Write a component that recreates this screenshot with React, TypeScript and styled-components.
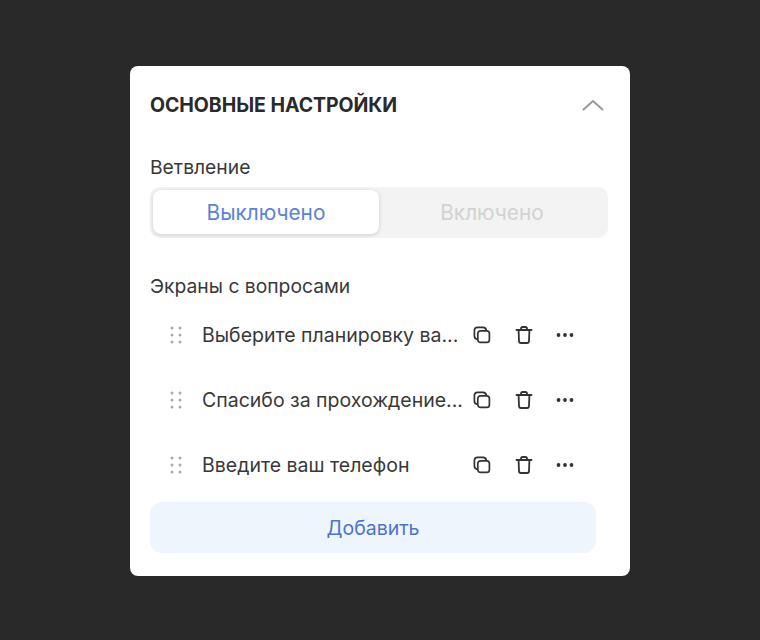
import React from "react";
import styled, { createGlobalStyle } from "styled-components";

const Global = createGlobalStyle`
  html, body { margin: 0; padding: 0; background: #292929; }
  body { font-family: Inter, "Noto Sans", sans-serif; }
`;

const Page = styled.div`
  width: 760px;
  height: 640px;
  background: #292929;
  display: flex;
  justify-content: center;
  align-items: flex-start;
  padding-top: 66px;
  box-sizing: border-box;
`;

const Card = styled.section`
  width: 500px;
  height: 510px;
  box-sizing: border-box;
  background: #fff;
  border-radius: 8px;
  padding: 0 20px;
  display: flex;
  flex-direction: column;
`;

const Header = styled.div`
  height: 76px;
  flex-shrink: 0;
  margin-bottom: 12px;
  padding-top: 1px;
  display: flex;
  align-items: center;
  justify-content: space-between;
`;

const Title = styled.h2`
  margin: 0;
  font-size: 19.5px;
  font-weight: 700;
  color: #2a2a2a;
  letter-spacing: -0.05px;
`;

const ChevronBtn = styled.span`
  display: flex;
  margin-right: 5px;
  color: #999;
`;

const Label = styled.div`
  font-size: 19.3px;
  line-height: 24px;
  color: #383838;
  height: 24px;
`;

const Segmented = styled.div`
  margin-top: 8px;
  width: 458px;
  height: 51px;
  flex-shrink: 0;
  box-sizing: border-box;
  padding: 3px 0 4px 3px;
  border-radius: 10px;
  background: #f3f3f3;
  display: flex;
`;

const Segment = styled.div<{ $active?: boolean }>`
  width: 226px;
  display: flex;
  align-items: center;
  justify-content: center;
  border-radius: 8px;
  font-size: 20.8px;
  color: ${(p) => (p.$active ? "#5a82d8" : "#d2d2d2")};
  background: ${(p) => (p.$active ? "#fff" : "transparent")};
  box-shadow: ${(p) => (p.$active ? "0 1px 4px rgba(0,0,0,0.16)" : "none")};
`;

const SectionLabel = styled(Label)`
  margin-top: 36px;
`;

const List = styled.div`
  margin-top: 5px;
  display: flex;
  flex-direction: column;
  gap: 1px;
`;

const Row = styled.div`
  height: 64px;
  display: flex;
  align-items: center;
  padding-left: 20px;
`;

const RowTitle = styled.span`
  margin-left: 19px;
  width: 262px;
  font-size: 19.5px;
  color: #383838;
  white-space: nowrap;
`;

const Actions = styled.div`
  display: flex;
  align-items: center;
  margin-left: 8px;
  gap: 21.5px;
  color: #333;
`;

const AddButton = styled.button`
  margin-top: 5px;
  width: 446px;
  height: 51px;
  flex-shrink: 0;
  border: 0;
  border-radius: 12px;
  background: #eff5fc;
  color: #4a74cf;
  font-family: inherit;
  font-size: 19.5px;
  padding: 0;
`;

const Grip = () => (
  <svg width="13" height="18" viewBox="0 0 13 18" fill="#ababab">
    {[2, 9, 16].flatMap((y) =>
      [2, 10].map((x) => <circle key={`${x}-${y}`} cx={x} cy={y} r="1.5" />)
    )}
  </svg>
);

const Copy = () => (
  <svg width="20" height="20" viewBox="0 0 20 20" fill="none" stroke="currentColor" strokeWidth="1.7" strokeLinejoin="round">
    <rect x="5.8" y="5.8" width="11.6" height="11.6" rx="2.7" />
    <path d="M5.8 14.4C3.7 14.2 2.4 13 2.4 11V5.6C2.4 3.5 3.5 2.4 5.6 2.4H11C13 2.4 14.2 3.7 14.4 5.8" />
  </svg>
);

const Trash = () => (
  <svg width="20" height="20" viewBox="0 0 20 20" fill="none" stroke="currentColor" strokeWidth="1.8" strokeLinecap="round" strokeLinejoin="round">
    <path d="M2.5 5H17.5" />
    <path d="M7 5V3.8C7 2.8 7.7 2 8.7 2H11.3C12.3 2 13 2.8 13 3.8V5" />
    <path d="M4.6 5L5 16C5 17.2 5.9 18 7 18H13C14.1 18 15 17.2 15 16L15.4 5" />
  </svg>
);

const Dots = () => (
  <svg width="20" height="20" viewBox="0 0 20 20" fill="currentColor">
    <circle cx="3.5" cy="10" r="1.9" />
    <circle cx="10" cy="10" r="1.9" />
    <circle cx="16.5" cy="10" r="1.9" />
  </svg>
);

const items = ["Выберите планировку ва...", "Спасибо за прохождение...", "Введите ваш телефон"];

export default function App() {
  return (
    <Page>
      <Global />
      <Card>
        <Header>
          <Title>ОСНОВНЫЕ НАСТРОЙКИ</Title>
          <ChevronBtn>
            <svg width="24" height="14" viewBox="0 0 24 14" fill="none" stroke="currentColor" strokeWidth="2" strokeLinecap="round" strokeLinejoin="round">
              <path d="M2.5 11.5L12 3L21.5 11.5" />
            </svg>
          </ChevronBtn>
        </Header>
        <Label>Ветвление</Label>
        <Segmented>
          <Segment $active>Выключено</Segment>
          <Segment>Включено</Segment>
        </Segmented>
        <SectionLabel>Экраны с вопросами</SectionLabel>
        <List>
          {items.map((t) => (
            <Row key={t}>
              <Grip />
              <RowTitle>{t}</RowTitle>
              <Actions>
                <Copy />
                <Trash />
                <Dots />
              </Actions>
            </Row>
          ))}
        </List>
        <AddButton>Добавить</AddButton>
      </Card>
    </Page>
  );
}
